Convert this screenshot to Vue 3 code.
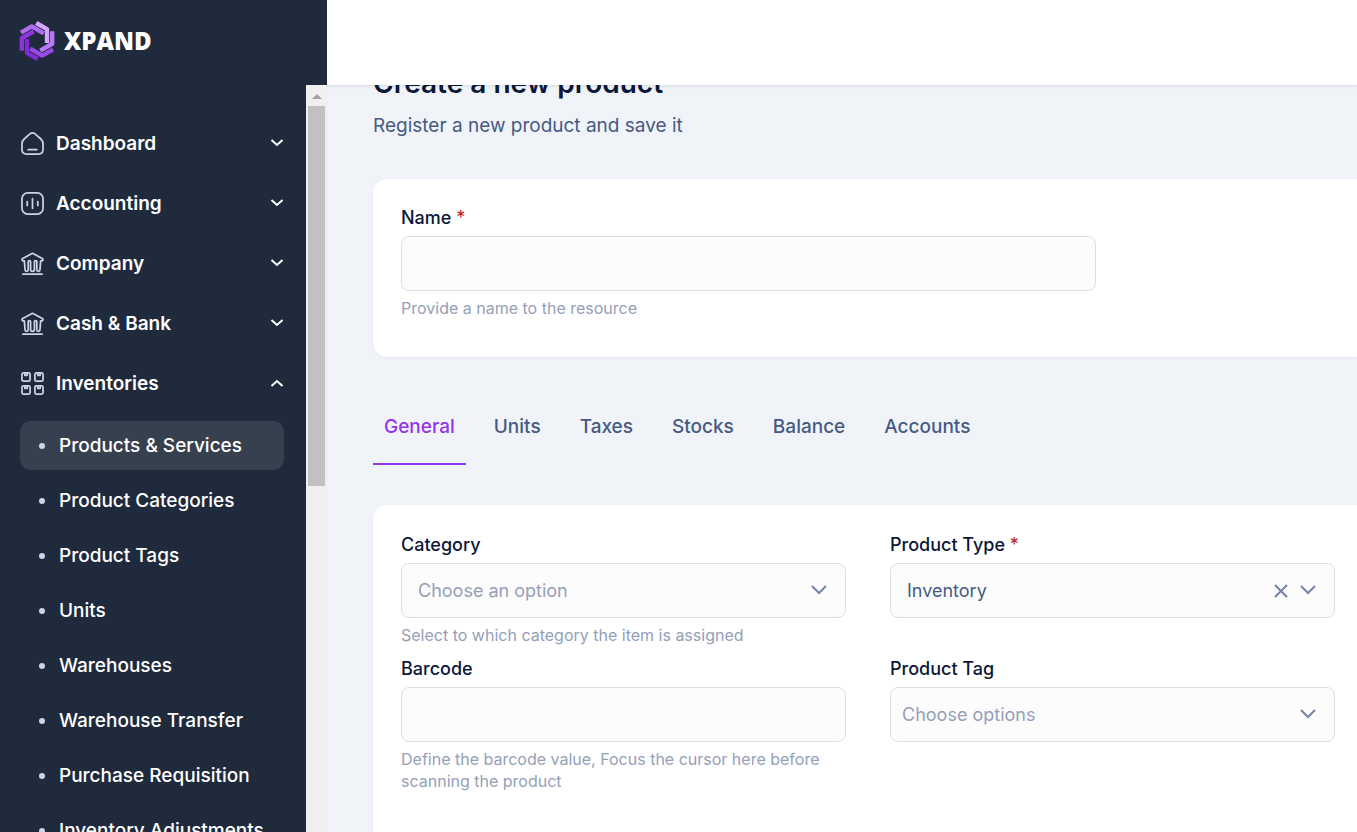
<script setup>
import { ref } from 'vue'

const groups = [
  { label: 'Dashboard', icon: 'home' },
  { label: 'Accounting', icon: 'chart' },
  { label: 'Company', icon: 'bank' },
  { label: 'Cash & Bank', icon: 'bank' },
  { label: 'Inventories', icon: 'boxes', open: true },
]
const items = [
  'Products & Services',
  'Product Categories',
  'Product Tags',
  'Units',
  'Warehouses',
  'Warehouse Transfer',
  'Purchase Requisition',
  'Inventory Adjustments',
]
const tabs = ['General', 'Units', 'Taxes', 'Stocks', 'Balance', 'Accounts']
const arms = [
  { angle: 0, color: '#d3a6fb' },
  { angle: 60, color: '#b878f6' },
  { angle: 120, color: '#9a48e6' },
  { angle: 180, color: '#8129d3' },
  { angle: 240, color: '#8f35dd' },
  { angle: 300, color: '#b06bf2' },
]
const activeItem = ref('Products & Services')
const activeTab = ref('General')
const name = ref('')
const category = ref('')
const productType = ref('inventory')
const barcode = ref('')
const tag = ref('')
</script>

<template>
  <div class="shell">
    <aside class="sidebar">
      <a class="brand" href="#" aria-label="Xpand">
        <svg class="mark" viewBox="-18 -20 36 40" aria-hidden="true">
          <path
            v-for="a in arms"
            :key="a.angle"
            d="M-.8 -18L10 -11.800V2"
            :stroke="a.color"
            :transform="`rotate(${a.angle})`"
          />
        </svg>
        <span>XPAND</span>
      </a>

      <div class="sidebar-body">
        <nav class="nav" aria-label="Main">
          <div v-for="g in groups" :key="g.label" class="group">
            <button class="group-toggle" type="button" :aria-expanded="!!g.open">
              <svg class="nav-icon" viewBox="0 0 24 24" aria-hidden="true">
                <template v-if="g.icon === 'home'">
                  <path d="M1 12.500c0-2.300.6-3.700 2.300-5.200L9.300 2c1.900-1.400 3.500-1.400 5.400 0l6 5.300c1.700 1.500 2.300 2.900 2.300 5.200v5.500c0 3.500-1.500 5-5 5H6c-3.500 0-5-1.500-5-5z" />
                  <path d="M7.500 18.500h9" />
                </template>
                <template v-else-if="g.icon === 'chart'">
                  <rect x="1" y="1" width="22" height="22" rx="6" />
                  <path d="M6.500 10v4M12 7v10M17.500 10v4" />
                </template>
                <template v-else-if="g.icon === 'bank'">
                  <path d="M2 23.200h20" />
                  <path d="M3.500 9.200H2L1 8.300 1.300 7 12 1.300 22.700 7l.3 1.300-1 .9h-1.500l-.7 9.300c0 2.200-3.300 2.200-3.300 0V10.200c0-1.600-2.500-1.600-2.500 0v8.300c0 2.200-4 2.200-4 0v-8.300c0-1.600-2.500-1.600-2.500 0v8.300c0 2.200-3.300 2.200-3.300 0z" />
                </template>
                <template v-else>
                  <rect x="1" y="1" width="8.500" height="8.500" rx="1.500" />
                  <rect x="14.500" y="1" width="8.500" height="8.500" rx="1.500" />
                  <rect x="1" y="14.500" width="8.500" height="8.500" rx="1.500" />
                  <rect x="14.500" y="14.500" width="8.500" height="8.500" rx="1.500" />
                  <path d="M4 1v2.500h2.500V1M17.500 1v2.500H20V1M4 14.500V17h2.500v-2.500M17.500 14.500V17H20v-2.500" />
                </template>
              </svg>
              <span class="group-label">{{ g.label }}</span>
              <svg class="caret" viewBox="0 0 14 14" aria-hidden="true">
                <path :d="g.open ? 'M1.500 10 7 5l5.500 5' : 'M1.500 4 7 9l5.500-5'" />
              </svg>
            </button>
          </div>
          <ul class="items">
            <li v-for="i in items" :key="i">
              <a href="#" class="item" :class="{ active: i === activeItem }" @click.prevent="activeItem = i">
                <span class="dot"></span>{{ i }}
              </a>
            </li>
          </ul>
        </nav>
        <div class="scrollbar" aria-hidden="true">
          <svg class="scroll-arrow" viewBox="0 0 22 21"><path d="M6 14h10l-5-5z" /></svg>
          <div class="thumb"></div>
        </div>
      </div>
    </aside>

    <div class="page">
      <header class="topbar"></header>
      <main class="content">
        <h1>Create a new product</h1>
        <p class="subtitle">Register a new product and save it</p>

        <section class="card name-card">
          <div class="field name-field">
            <label for="name">Name <span class="req">*</span></label>
            <input id="name" v-model="name" class="control" type="text" required />
            <p class="help">Provide a name to the resource</p>
          </div>
        </section>

        <div class="tabs" role="tablist">
          <button
            v-for="t in tabs"
            :key="t"
            type="button"
            role="tab"
            class="tab"
            :class="{ active: t === activeTab }"
            :aria-selected="t === activeTab"
            @click="activeTab = t"
          >{{ t }}</button>
        </div>

        <section class="card grid">
          <div class="field">
            <label for="category">Category</label>
            <div class="select-wrap">
              <select id="category" v-model="category" class="control" :class="{ empty: !category }">
                <option value="">Choose an option</option>
              </select>
              <svg class="chevron" viewBox="0 0 16 16" aria-hidden="true"><path d="M1 4l7 7 7-7" /></svg>
            </div>
            <p class="help">Select to which category the item is assigned</p>
          </div>
          <div class="field">
            <label for="type">Product Type <span class="req">*</span></label>
            <div class="select-wrap">
              <select id="type" v-model="productType" class="control" required>
                <option value="inventory">Inventory</option>
              </select>
              <button class="clear" type="button" aria-label="Clear product type" @click="productType = ''">
                <svg viewBox="0 0 14 14" aria-hidden="true"><path d="M1 1l12 12M13 1L1 13" /></svg>
              </button>
              <svg class="chevron" viewBox="0 0 16 16" aria-hidden="true"><path d="M1 4l7 7 7-7" /></svg>
            </div>
          </div>
          <div class="field">
            <label for="barcode">Barcode</label>
            <input id="barcode" v-model="barcode" class="control" type="text" />
            <p class="help">Define the barcode value, Focus the cursor here before scanning the product</p>
          </div>
          <div class="field">
            <label for="tag">Product Tag</label>
            <div class="select-wrap">
              <select id="tag" v-model="tag" class="control tags" :class="{ empty: !tag }">
                <option value="">Choose options</option>
              </select>
              <svg class="chevron" viewBox="0 0 16 16" aria-hidden="true"><path d="M1 4l7 7 7-7" /></svg>
            </div>
          </div>
        </section>
      </main>
    </div>
  </div>
</template>

<style>
body {
  margin: 0;
  overflow: hidden;
}
</style>

<style scoped>
* {
  box-sizing: border-box;
}
.shell {
  display: flex;
  height: 100vh;
  overflow: hidden;
  background: #f0f4f9;
  color: #0b1739;
  font-family: Inter, "Liberation Sans", sans-serif;
}
button,
input,
select {
  font-family: inherit;
}
.sidebar {
  display: flex;
  flex-direction: column;
  flex: 0 0 327px;
  background: #1f2a3c;
}
.brand {
  display: flex;
  align-items: center;
  flex: 0 0 85px;
  gap: 9px;
  padding: 0 19px 4px;
  color: #fff;
  text-decoration: none;
  font: 800 24px/32px "Open Sans", sans-serif;
}
.mark {
  width: 36px;
  height: 40px;
  fill: none;
  stroke-width: 4.4;
  stroke-linejoin: round;
}
.sidebar-body {
  display: flex;
  flex: 1;
  min-height: 0;
}
.nav {
  flex: 1;
  overflow: hidden;
  padding: 34px 22px 0 20px;
}
.group {
  padding-bottom: 12px;
}
.group-toggle {
  display: flex;
  align-items: center;
  width: 100%;
  height: 48px;
  padding: 0 0 0 1px;
  border: 0;
  background: none;
  color: #fff;
  text-align: left;
  font-size: 19px;
  font-weight: 600;
}
.nav-icon {
  width: 23px;
  height: 23px;
  margin-right: 12px;
  fill: none;
  stroke: #cbd5e8;
  stroke-width: 1.8;
  stroke-linecap: round;
  stroke-linejoin: round;
}
.group-label {
  flex: 1;
}
.caret {
  width: 14px;
  height: 14px;
  fill: none;
  stroke: #fff;
  stroke-width: 2;
}
.items {
  margin: 2px 0 0;
  padding: 0;
  list-style: none;
}
.items li {
  padding-bottom: 6px;
}
.item {
  display: flex;
  align-items: center;
  height: 49px;
  padding-left: 19px;
  border-radius: 11px;
  color: #fff;
  font-size: 19px;
  font-weight: 500;
  text-decoration: none;
  white-space: nowrap;
}
.item.active {
  background: #37404f;
}
.dot {
  width: 6px;
  height: 6px;
  margin-right: 14px;
  border-radius: 50%;
  background: #cbd5e8;
}
.scrollbar {
  flex: 0 0 22px;
  margin-right: -1px;
  background: #f0f0f0;
}
.scroll-arrow {
  display: block;
  width: 22px;
  height: 21px;
  fill: #a3a0a0;
}
.thumb {
  width: 17px;
  height: 380px;
  margin-left: 2px;
  background: #c1c1c1;
}
.page {
  display: flex;
  flex: 1;
  flex-direction: column;
  min-width: 0;
}
.topbar {
  position: relative;
  flex: 0 0 85px;
  background: #fff;
  box-shadow: 0 1px 3px rgba(15, 23, 42, 0.12);
}
.content {
  flex: 1;
  min-height: 0;
  padding-left: 46px;
}
h1 {
  margin: -20px 0 0;
  font-size: 28px;
  font-weight: 600;
  line-height: 36px;
}
.subtitle {
  margin: 11px 0 39px;
  color: #475a82;
  font-size: 19px;
  line-height: 28px;
}
.card {
  padding: 28px 22px 28px 28px;
  border-radius: 14px 0 0 14px;
  background: #fff;
  box-shadow: 0 1px 3px rgba(15, 23, 42, 0.06);
}
.name-card {
  padding-bottom: 38px;
}
.name-field {
  max-width: 695px;
}
.field {
  display: flex;
  flex-direction: column;
  min-width: 0;
}
label {
  margin-bottom: 7px;
  font-size: 18px;
  font-weight: 500;
  line-height: 22px;
}
.req {
  color: #b42323;
  font-weight: 400;
}
.control {
  display: block;
  width: 100%;
  height: 55px;
  padding: 0 17px;
  border: 1px solid #dadfea;
  border-radius: 8px;
  outline: 0;
  appearance: none;
  background: #fcfcfc;
  color: #475a82;
  font-size: 18px;
}
select.control {
  padding: 0 64px 0 16px;
}
select.tags {
  padding-left: 11px;
}
.control.empty {
  color: #94a0b8;
}
.help {
  margin: 6px 0 0;
  color: #94a0b8;
  font-size: 16px;
  line-height: 22px;
}
.tabs {
  display: flex;
  gap: 17px;
  margin: 30px 0 40px;
}
.tab {
  height: 78px;
  padding: 2px 11px 0;
  border: 0;
  border-bottom: 2px solid transparent;
  background: none;
  color: #475a82;
  font-size: 19px;
  font-weight: 500;
}
.tab.active {
  border-color: #9333ea;
  color: #9333ea;
}
.grid {
  display: grid;
  grid-template-columns: 1fr 1fr;
  gap: 12px 44px;
  padding-top: 29px;
  padding-bottom: 60px;
}
.select-wrap {
  position: relative;
}
.chevron,
.clear svg {
  fill: none;
  stroke: #7483a6;
  stroke-width: 2;
}
.chevron {
  position: absolute;
  top: 19px;
  right: 19px;
  width: 16px;
  height: 16px;
  pointer-events: none;
}
.clear {
  position: absolute;
  top: 18px;
  right: 44px;
  width: 20px;
  height: 20px;
  padding: 3px;
  border: 0;
  background: none;
}
.clear svg {
  display: block;
  width: 14px;
  height: 14px;
}
</style>
